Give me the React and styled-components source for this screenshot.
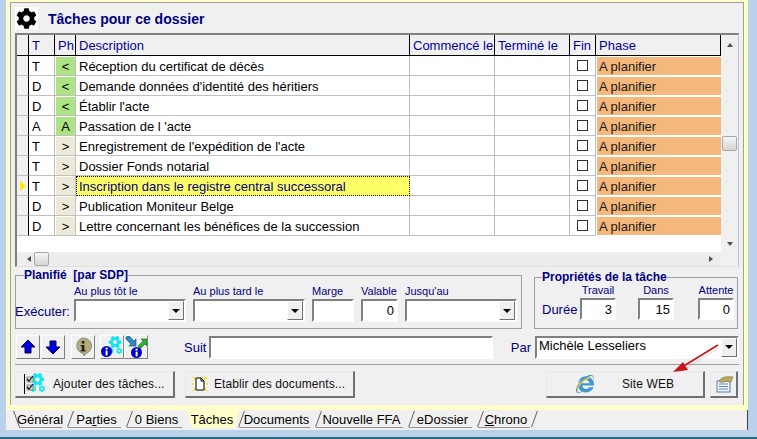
import styled, { createGlobalStyle } from 'styled-components'
import { FaCog, FaCogs, FaInternetExplorer } from 'react-icons/fa'

const GlobalStyle = createGlobalStyle`
  html, body {
    margin: 0;
    padding: 0;
    background: #b9d1ea;
    overflow: hidden;
  }
  * {
    box-sizing: border-box;
  }
`

const Screen = styled.div`
  position: relative;
  width: 757px;
  height: 439px;
  padding: 0 9px 0 6px;
  border-bottom: 2px solid #1f6f80;
  font-family: "Liberation Sans", Arial, sans-serif;
  font-size: 13px;
  color: #000;
`
const YellowFrame = styled.div`
  padding: 2px 4px 5px 4px;
  background: #ffffcc;
`
const Panel = styled.div`
  height: 403px;
  padding: 0 4px;
  background: #f0f0f0;
  border: 1px solid #a0a0a0;
  border-bottom: 0;
`

/* title */
const TitleRow = styled.div`
  display: flex;
  align-items: center;
  gap: 10px;
  height: 30px;
  padding-top: 1px;
`
const TitleIcon = styled.div`
  display: flex;
  align-items: center;
  justify-content: center;
  width: 23px;
  height: 23px;
  background: #fff;
  font-size: 21px;
`
const Title = styled.div`
  font-size: 14px;
  font-weight: 700;
  color: #000080;
`

/* table */
const GridFrame = styled.div`
  display: flex;
  height: 234px;
  border-top: 2px solid #808080;
  border-left: 2px solid #808080;
  border-right: 1px solid #c0c0c0;
  border-bottom: 1px solid #e0e0e0;
`
const GridMain = styled.div`
  display: flex;
  flex-direction: column;
  width: 704px;
`
const Table = styled.div`
  flex: 1;
  background: #fff;
`
const Row = styled.div`
  display: grid;
  grid-template-columns: 12px 26px 21px 334px 85px 75px 26px 125px;
  height: ${props => (props.$header ? '21px' : '20px')};
`
const HeaderCell = styled.div`
  display: flex;
  align-items: center;
  padding-left: 3px;
  background: #f0f0f0;
  color: #0000a0;
  border-right: 1px solid #000;
  border-bottom: 1px solid #000;
  white-space: nowrap;
  overflow: hidden;
`
const Cell = styled.div`
  display: flex;
  align-items: center;
  padding: 1px 0 0 3px;
  border-right: 1px solid #c0c0c0;
  border-bottom: 1px solid #c0c0c0;
  white-space: nowrap;
`
const Indicator = styled.div`
  display: flex;
  align-items: center;
  padding-left: 3px;
  background: #f0f0f0;
  border-right: 1px solid #000;
  border-bottom: 1px solid #c0c0c0;
`
const Pointer = styled.div`
  width: 0;
  height: 0;
  border-left: 6px solid #ffee00;
  border-top: 5px solid transparent;
  border-bottom: 5px solid transparent;
`
const PhCell = styled.div`
  display: flex;
  align-items: center;
  justify-content: center;
  border-right: 1px solid #c0c0c0;
  border-bottom: 1px solid #c0c0c0;
  background: #fff;
  padding: 1px 0 0 1px;
`
const PhBadge = styled.div`
  display: flex;
  align-items: center;
  justify-content: center;
  width: 100%;
  height: 100%;
  background: ${props => (props.$done ? '#ace384' : '#ece9d8')};
`
const SelectedDesc = styled.div`
  display: flex;
  align-items: center;
  padding-left: 2px;
  background: #ffff66;
  color: #000080;
  border: 1px dotted #000;
  white-space: nowrap;
`
const FinCell = styled.div`
  display: flex;
  justify-content: center;
  padding-top: 4px;
  border-right: 1px solid #c0c0c0;
  border-bottom: 1px solid #c0c0c0;
`
const Check = styled.div`
  width: 11px;
  height: 11px;
  background: #fff;
  border: 1px solid #333;
`
const PhaseCell = styled.div`
  display: flex;
  align-items: center;
  padding-left: 2px;
  margin: 1px 0 0 1px;
  background: #f5b87c;
  border-bottom: 1px solid #fff;
  color: #1a1a1a;
`

/* scrollbars */
const HScroll = styled.div`
  display: flex;
  align-items: center;
  height: 14px;
  padding-left: 6px;
  background: #ededed;
`
const VScroll = styled.div`
  display: flex;
  flex-direction: column;
  align-items: center;
  flex: 1;
  padding-top: 5px;
  background: #f0f0f0;
`
const Arrow = styled.div`
  width: 0;
  height: 0;
  border-style: solid;
  border-color: transparent;
  border-width: ${props => (props.$dir === 'up' || props.$dir === 'down' ? '4px 3.5px' : '3.5px 4px')};
  ${props => props.$dir === 'up' && 'border-bottom-color: #505050; margin-top: -1px;'}
  ${props => props.$dir === 'down' && 'border-top-color: #505050; margin-top: 91px;'}
  ${props => props.$dir === 'left' && 'border-right-color: #505050;'}
  ${props => props.$dir === 'right' && 'border-left-color: #505050; margin-left: 660px;'}
`
const Thumb = styled.div`
  flex-shrink: 0;
  width: 15px;
  height: ${props => (props.$vertical ? '15px' : '14px')};
  margin: ${props => (props.$vertical ? '89px 0 0 0' : '0 0 0 3px')};
  background: linear-gradient(#f6f6f6, #d4d4d4);
  border: 1px solid #a8a8a8;
  border-radius: 2px;
`

/* group boxes */
const GroupRow = styled.div`
  display: flex;
  gap: 12px;
  margin-top: 1px;
  height: 61px;
  align-items: flex-start;
`
const Group = styled.fieldset`
  margin: ${props => (props.$wide ? 0 : '2px 0 0 0')};
  padding: 0;
  width: ${props => (props.$wide ? 507 : 204)}px;
  height: ${props => (props.$wide ? 61 : 59)}px;
  border: 1px solid #a0a0a0;
  min-inline-size: 0;
`
const Legend = styled.legend`
  margin-left: ${props => props.$left}px;
  padding: 0;
  font-size: 12px;
  font-weight: 700;
  line-height: 14px;
  color: #000080;
  white-space: pre;
`
const GroupBody = styled.div`
  display: flex;
  align-items: flex-end;
  gap: ${props => props.$gap}px;
  height: ${props => props.$height}px;
`
const SideLabel = styled.div`
  flex-shrink: 0;
  width: ${props => props.$width}px;
  margin-left: ${props => props.$left}px;
  margin-bottom: 2px;
  color: #000080;
  line-height: 16px;
`
const Field = styled.div`
  display: flex;
  flex-direction: column;
  flex-shrink: 0;
  width: ${props => props.$width}px;
  margin-left: ${props => props.$left || 0}px;
`
const FieldLabel = styled.div`
  height: 15px;
  font-size: 11px;
  line-height: 14px;
  color: #000080;
  text-align: ${props => (props.$center ? 'center' : 'left')};
  white-space: nowrap;
`
const Input = styled.div`
  display: flex;
  align-items: center;
  justify-content: ${props => (props.$right ? 'flex-end' : 'flex-start')};
  flex: ${props => (props.$grow ? 1 : 'none')};
  height: ${props => props.$height || 23}px;
  padding: 0 2px;
  background: #fff;
  border: 2px solid;
  border-color: #808080 #fff #fff #808080;
`
const Combo = styled.div`
  display: flex;
  align-items: stretch;
  justify-content: space-between;
  width: ${props => props.$width || 'auto'};
  height: 23px;
  padding-left: 2px;
  background: #fff;
  border: 2px solid;
  border-color: #808080 #fff #fff #808080;
`
const ComboDrop = styled.div`
  display: flex;
  align-items: center;
  justify-content: center;
  width: 16px;
  background: #f0f0f0;
  border: 1px solid;
  border-color: #fff #707070 #707070 #fff;
`
const DropTriangle = styled.div`
  width: 0;
  height: 0;
  border-left: 4px solid transparent;
  border-right: 4px solid transparent;
  border-top: 4px solid #000;
`

/* tools row */
const ToolRow = styled.div`
  display: flex;
  align-items: center;
  margin-top: 6px;
  height: 24px;
`
const ToolButton = styled.div`
  display: flex;
  align-items: center;
  justify-content: center;
  flex-shrink: 0;
  width: 24px;
  height: 24px;
  margin-left: ${props => props.$left || 0}px;
  background: #f0f0f0;
  border: 1px solid;
  border-color: #fff #808080 #808080 #fff;
`
const RowLabel = styled.div`
  flex-shrink: 0;
  margin-left: ${props => props.$left}px;
  margin-right: ${props => props.$right}px;
  color: #000080;
`
const Separator = styled.div`
  height: 1px;
  margin-top: 5px;
  background: #a0a0a0;
`
const ButtonRow = styled.div`
  display: flex;
  margin-top: 6px;
  height: 27px;
`
const PushButton = styled.div`
  display: flex;
  align-items: center;
  flex-shrink: 0;
  width: ${props => props.$width}px;
  margin-left: ${props => props.$left || 0}px;
  padding-left: ${props => props.$pad || 9}px;
  gap: ${props => props.$gap || 6}px;
  background: #f0f0f0;
  border: 1px solid;
  border-color: #e8e8e8 #707070 #707070 #e8e8e8;
  border-bottom-width: 2px;
  border-right-width: 2px;
  color: #111;
  font-size: 12px;
  letter-spacing: .1px;
  white-space: nowrap;
`

/* tabs */
const TabStrip = styled.div`
  display: flex;
  height: 20px;
  padding-left: 8px;
  background: #f0f0f0;
  border-right: 1px solid #404040;
`
const Tab = styled.div`
  position: relative;
  display: flex;
  align-items: center;
  justify-content: center;
  width: ${props => props.$width}px;
  height: 18px;
  padding-right: 2px;
  white-space: nowrap;
  &::before {
    content: '';
    position: absolute;
    left: 2px;
    top: 1px;
    height: 16px;
    border-left: 1px solid #606060;
    transform: skewX(${props => (props.$first ? 20 : -20)}deg);
  }
  &::after {
    content: '';
    position: absolute;
    left: ${props => (props.$first ? 5 : 0)}px;
    right: 6px;
    bottom: 0;
    border-bottom: 1px solid #909090;
  }
`
const ActiveTab = styled(Tab)`
  z-index: 1;
  background: #ffffcc;
  margin-left: -1px;
  width: ${props => props.$width + 2}px;
  clip-path: polygon(0 0, 100% 0, 92% 100%, 10% 100%);
  &::before,
  &::after {
    display: none;
  }
`
const TabEnd = styled.div`
  height: 16px;
  margin-top: 1px;
  border-left: 1px solid #606060;
  transform: skewX(-20deg) translateX(-2px);
`

const PointerArrow = styled.svg`
  position: absolute;
  left: 660px;
  top: 335px;
  pointer-events: none;
`

const rows = [
  ['T', '<', 'Réception du certificat de décès'],
  ['D', '<', "Demande données d'identité des héritiers"],
  ['D', '<', "Établir l'acte"],
  ['A', 'A', "Passation de l 'acte"],
  ['T', '>', "Enregistrement de l'expédition de l'acte"],
  ['T', '>', 'Dossier Fonds notarial'],
  ['T', '>', 'Inscription dans le registre central successoral', true],
  ['D', '>', 'Publication Moniteur Belge'],
  ['D', '>', 'Lettre concernant les bénéfices de la succession'],
]

const tabs = [
  { name: 'Général', width: 54, first: true },
  { name: <>Pa<u>r</u>ties</>, width: 59 },
  { name: '0 Biens', width: 61 },
  { name: 'Tâches', width: 50, active: true },
  { name: 'Documents', width: 77 },
  { name: 'Nouvelle FFA', width: 93 },
  { name: 'eDossier', width: 69 },
  { name: <><u>C</u>hrono</>, width: 58 },
]

const UpDown = ({ down }) => (
  <svg width="16" height="16" viewBox="0 0 16 16">
    <path
      d={down ? 'M5 2h6v6h4l-7 7-7-7h4z' : 'M8 1l7 7h-4v6H5V8H1z'}
      fill="#0000e0"
      stroke="#000050"
      strokeWidth="1"
    />
  </svg>
)

const InfoBalloon = () => (
  <svg width="20" height="20" viewBox="0 0 20 20">
    <path d="M10 1a8.500 8 0 0 1 3 15.500L11 19l-1-2.600A8.500 8 0 0 1 10 1z" fill="#b5ab78" stroke="#8c8c8c" />
    <rect x="8.800" y="4" width="2.600" height="2.600" fill="#222" />
    <rect x="8.800" y="8" width="2.600" height="6" fill="#222" />
    <rect x="7.600" y="8" width="2" height="1.200" fill="#222" />
    <rect x="7.600" y="13.200" width="5" height="1.200" fill="#222" />
  </svg>
)

const BlueInfo = ({ x, y }) => (
  <g transform={`translate(${x} ${y})`}>
    <circle cx="5.500" cy="5.500" r="5.500" fill="#0000c8" />
    <rect x="4.600" y="1.600" width="2" height="2" fill="#fff" />
    <rect x="4.600" y="4.600" width="2" height="4.800" fill="#fff" />
  </g>
)

const CogInfo = () => (
  <svg width="22" height="22" viewBox="0 0 22 22">
    <foreignObject x="5" y="0" width="17" height="22">
      <FaCogs size={18} color="#14e6f0" style={{ transform: 'rotate(90deg)' }} />
    </foreignObject>
    <BlueInfo x={0} y={10} />
  </svg>
)

const ArrowsInfo = () => (
  <svg width="22" height="22" viewBox="0 0 22 22">
    <path d="M1 1l3-1 5 5 2-2v7H4l2-2-5-5z" fill="#2a8cc8" stroke="#104060" strokeWidth=".6" />
    <path d="M13 10l5-5-2-2h6v7l-2-2-5 5z" fill="#30b030" stroke="#106010" strokeWidth=".6" />
    <BlueInfo x={6} y={11} />
  </svg>
)

const ChecklistCogs = () => (
  <svg width="22" height="22" viewBox="0 0 22 22">
    <foreignObject x="4" y="0" width="18" height="22">
      <FaCogs size={19} color="#14e6f0" style={{ transform: 'rotate(90deg)' }} />
    </foreignObject>
    <rect x="0" y="1" width="1" height="20" fill="#000" />
    <rect x="3" y="4" width="6" height="5" fill="#f0e060" stroke="#444" strokeWidth=".5" />
    <rect x="3" y="12" width="6" height="5" fill="#f0e060" stroke="#444" strokeWidth=".5" />
    <path d="M3 6l2 2 4-5M3 14l2 2 4-5" fill="none" stroke="#0000c0" strokeWidth="1.200" />
  </svg>
)

const SparkDoc = () => (
  <svg width="16" height="16" viewBox="0 0 16 16">
    <path d="M1 1l3 3M15 1l-3 3M0 8h2M14 8h2M1 15l3-3M15 15l-3-3M11 0l-1 2" stroke="#f0e000" strokeWidth="1.300" />
    <path d="M4 2h5l3 3v9H4z" fill="#fff" stroke="#000" />
    <path d="M9 2v3h3" fill="none" stroke="#000" />
  </svg>
)

const IeIcon = () => (
  <svg width="18" height="18" viewBox="0 0 18 18">
    <foreignObject x="0" y="0" width="18" height="18">
      <FaInternetExplorer size={18} color="#3c97d3" />
    </foreignObject>
    <path d="M2 15c-2-2 3-9 12-13" fill="none" stroke="#e8c838" strokeWidth="1.400" />
  </svg>
)

const FormIcon = () => (
  <svg width="18" height="18" viewBox="0 0 18 18">
    <rect x="1" y="6" width="13" height="11" fill="#eef3fa" stroke="#5a7ca8" />
    <path d="M3 9h9M3 11.500h9M3 14h9" stroke="#6a8cc0" />
    <path d="M3 6c2-4 7-5 14-4l-2 5c-3-1-7-1-9 1z" fill="#b8a860" stroke="#6a6030" strokeWidth=".5" />
  </svg>
)

const DropButton = () => (
  <ComboDrop>
    <DropTriangle />
  </ComboDrop>
)

const App = () => (
  <Screen>
    <GlobalStyle />
    <YellowFrame>
      <Panel>
        <TitleRow>
          <TitleIcon>
            <FaCog />
          </TitleIcon>
          <Title>Tâches pour ce dossier</Title>
        </TitleRow>

        <GridFrame>
          <GridMain>
            <Table>
              <Row $header>
                <HeaderCell />
                <HeaderCell>T</HeaderCell>
                <HeaderCell>Ph</HeaderCell>
                <HeaderCell>Description</HeaderCell>
                <HeaderCell>Commencé le</HeaderCell>
                <HeaderCell>Terminé le</HeaderCell>
                <HeaderCell>Fin</HeaderCell>
                <HeaderCell>Phase</HeaderCell>
              </Row>
              {rows.map(([type, ph, text, selected]) => (
                <Row key={text}>
                  <Indicator>{selected && <Pointer />}</Indicator>
                  <Cell>{type}</Cell>
                  <PhCell>
                    <PhBadge $done={ph !== '>'}>{ph}</PhBadge>
                  </PhCell>
                  {selected ? <SelectedDesc>{text}</SelectedDesc> : <Cell>{text}</Cell>}
                  <Cell />
                  <Cell />
                  <FinCell>
                    <Check />
                  </FinCell>
                  <PhaseCell>A planifier</PhaseCell>
                </Row>
              ))}
            </Table>
            <HScroll>
              <Arrow $dir="left" />
              <Thumb />
              <Arrow $dir="right" />
            </HScroll>
          </GridMain>
          <VScroll>
            <Arrow $dir="up" />
            <Thumb $vertical />
            <Arrow $dir="down" />
          </VScroll>
        </GridFrame>

        <GroupRow>
          <Group $wide>
            <Legend $left={8}>{'Planifié  [par SDP]'}</Legend>
            <GroupBody $gap={7} $height={40}>
              <SideLabel $width={52} $left={-1}>Exécuter:</SideLabel>
              <Field $width={112}>
                <FieldLabel>Au plus tôt le</FieldLabel>
                <Combo><span /><DropButton /></Combo>
              </Field>
              <Field $width={112}>
                <FieldLabel>Au plus tard le</FieldLabel>
                <Combo><span /><DropButton /></Combo>
              </Field>
              <Field $width={42}>
                <FieldLabel>Marge</FieldLabel>
                <Input />
              </Field>
              <Field $width={37}>
                <FieldLabel>Valable</FieldLabel>
                <Input $right>0</Input>
              </Field>
              <Field $width={112}>
                <FieldLabel>Jusqu'au</FieldLabel>
                <Combo><span /><DropButton /></Combo>
              </Field>
            </GroupBody>
          </Group>
          <Group>
            <Legend $left={7}>Propriétés de la tâche</Legend>
            <GroupBody $gap={22} $height={36}>
              <SideLabel $width={38} $left={7}>Durée</SideLabel>
              <Field $width={36} $left={-22}>
                <FieldLabel $center>Travail</FieldLabel>
                <Input $right $height={22}>3</Input>
              </Field>
              <Field $width={36}>
                <FieldLabel $center>Dans</FieldLabel>
                <Input $right $height={22}>15</Input>
              </Field>
              <Field $width={36} $left={2}>
                <FieldLabel $center>Attente</FieldLabel>
                <Input $right $height={22}>0</Input>
              </Field>
            </GroupBody>
          </Group>
        </GroupRow>

        <ToolRow>
          <ToolButton $left={1}><UpDown /></ToolButton>
          <ToolButton $left={1}><UpDown down /></ToolButton>
          <ToolButton $left={6}><InfoBalloon /></ToolButton>
          <ToolButton $left={5}><CogInfo /></ToolButton>
          <ToolButton><ArrowsInfo /></ToolButton>
          <RowLabel $left={36} $right={3}>Suit</RowLabel>
          <Input $grow />
          <RowLabel $left={18} $right={4}>Par</RowLabel>
          <Combo $width="204px">
            <span>Michèle Lesseliers</span>
            <DropButton />
          </Combo>
        </ToolRow>

        <Separator />

        <ButtonRow>
          <PushButton $width={160} $pad={8} $gap={7}>
            <ChecklistCogs />
            Ajouter des tâches...
          </PushButton>
          <PushButton $width={170} $left={10} $pad={6} $gap={6}>
            <SparkDoc />
            Etablir des documents...
          </PushButton>
          <PushButton $width={159} $left={191} $pad={29} $gap={28}>
            <IeIcon />
            Site WEB
          </PushButton>
          <PushButton $width={28} $left={5} $pad={5}>
            <FormIcon />
          </PushButton>
        </ButtonRow>
      </Panel>
    </YellowFrame>

    <TabStrip>
      {tabs.map(tab => {
        const Item = tab.active ? ActiveTab : Tab
        return (
          <Item key={tab.width} $width={tab.width} $first={tab.first}>
            {tab.name}
          </Item>
        )
      })}
      <TabEnd />
    </TabStrip>

    <PointerArrow width="70" height="45" viewBox="0 0 70 45">
      <path d="M58 11L21 34" stroke="#c00000" strokeWidth="1" opacity=".15" transform="translate(1 2)" />
      <path d="M58 10L22 32" stroke="#c8141e" strokeWidth="1.600" />
      <path d="M13 37l15-2-5-8z" fill="#c8141e" />
    </PointerArrow>
  </Screen>
)

export default App
